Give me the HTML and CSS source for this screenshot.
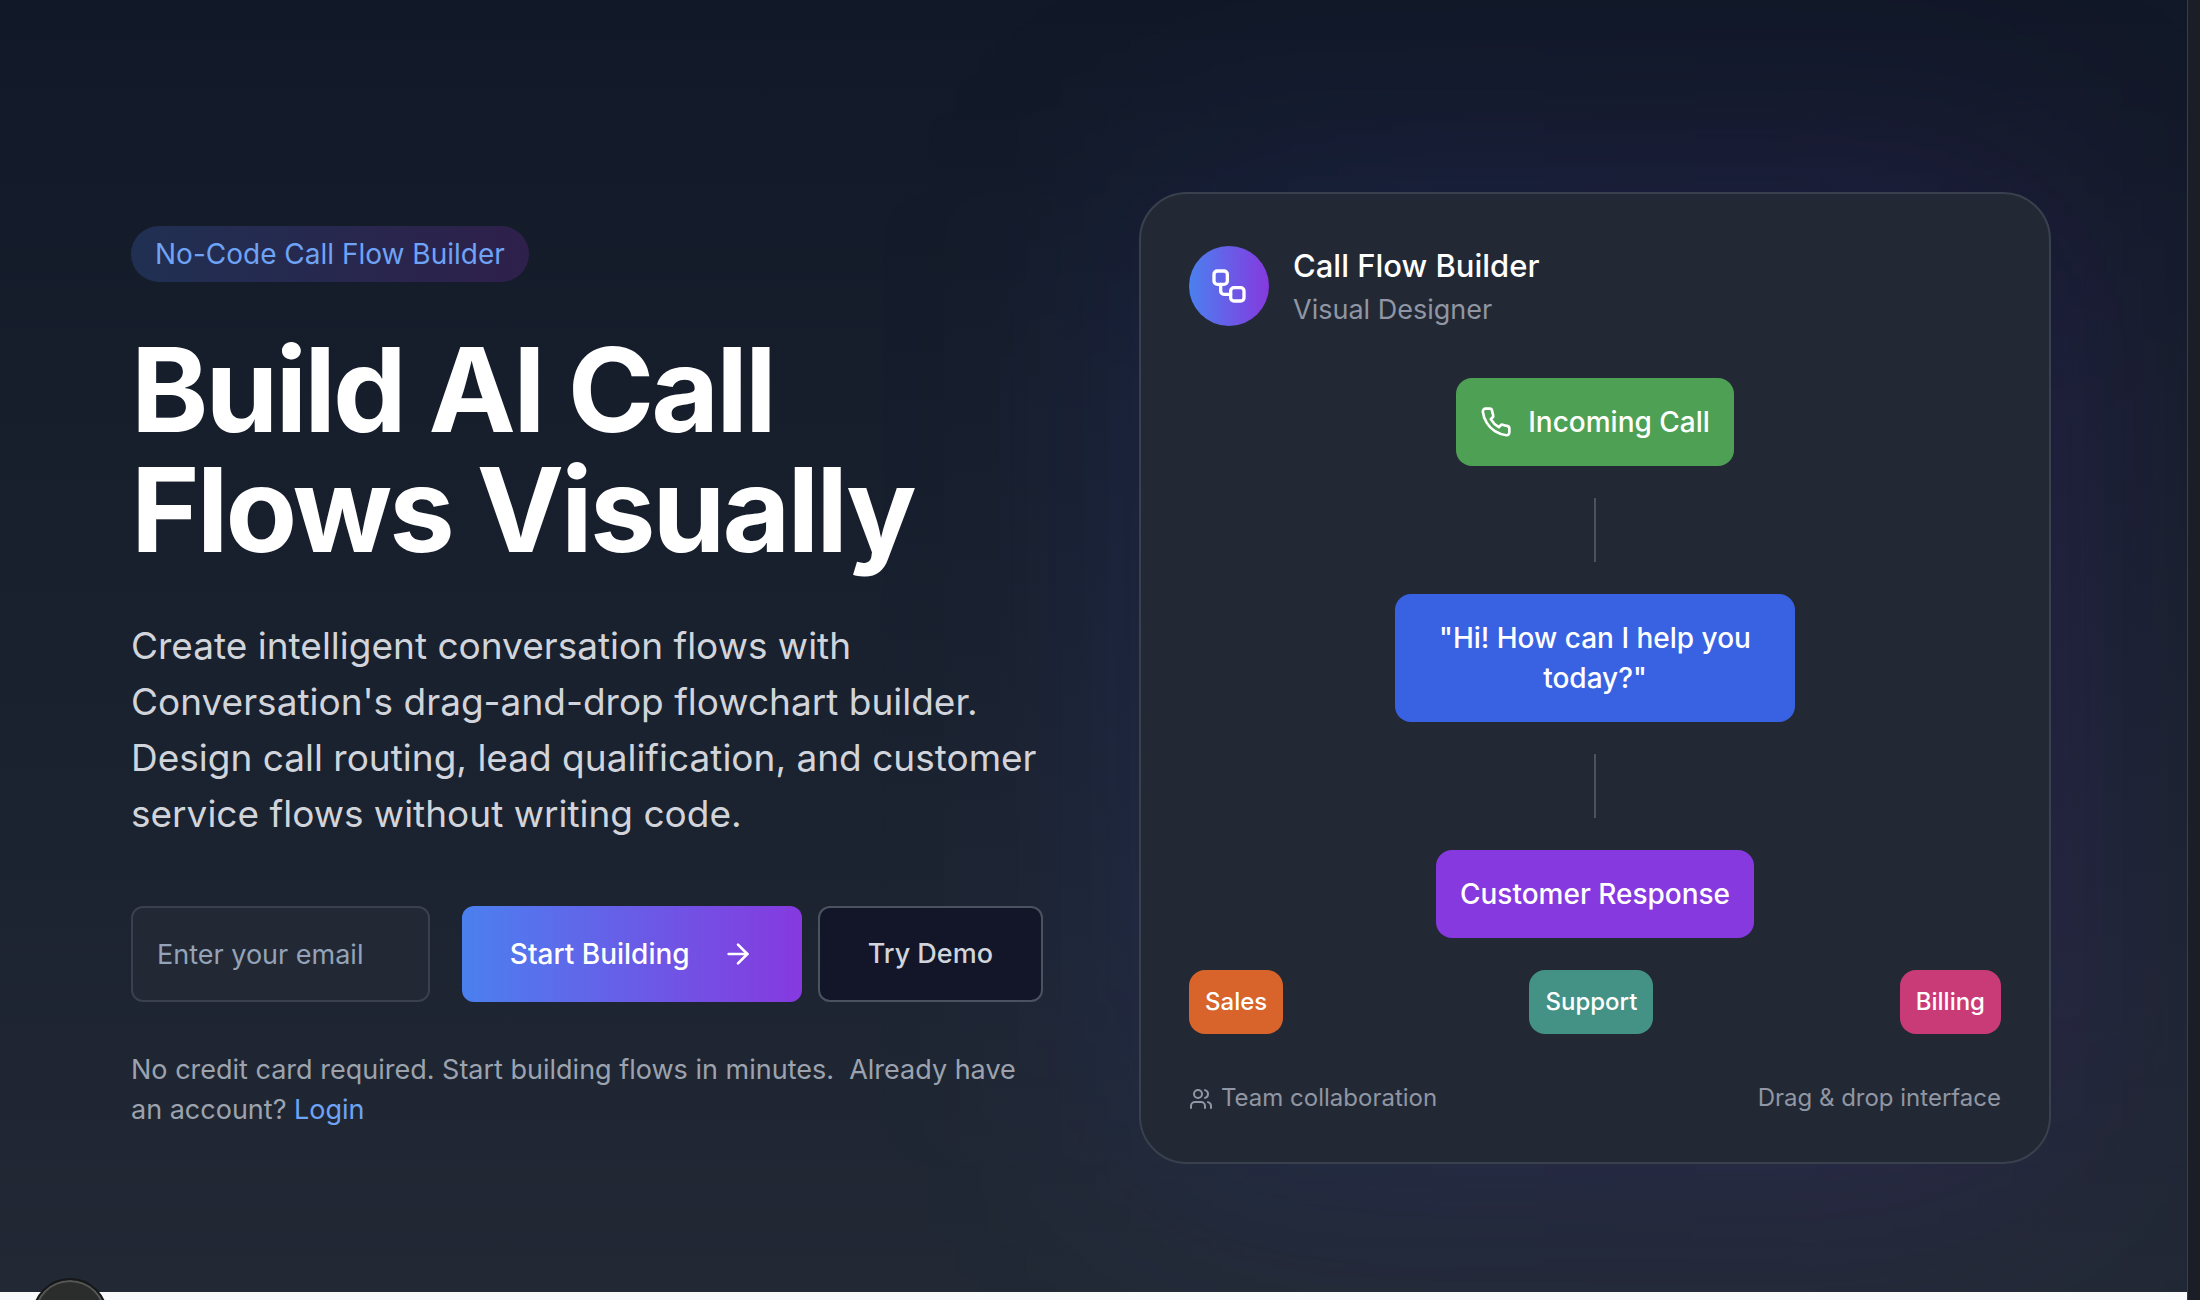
FILE: index.html
```html
<!DOCTYPE html>
<html lang="en">
<head>
  <meta charset="utf-8">
  <meta name="viewport" content="width=device-width, initial-scale=1">
  <title>Call Flow Builder</title>
  <link rel="stylesheet" href="styles.css">
</head>
<body>
  <div class="page">
    <main class="content">
      <section class="hero">
        <div class="hero-grid">
          <div class="intro">
            <span class="badge">No-Code Call Flow Builder</span>
            <h1 class="headline">Build AI Call<br>Flows Visually</h1>
            <p class="lead">Create intelligent conversation flows with Conversation's drag-and-drop flowchart builder. Design call routing, lead qualification, and customer service flows without writing code.</p>
            <form class="signup">
              <input class="email" type="email" placeholder="Enter your email" aria-label="Email address">
              <div class="actions">
                <button class="btn btn-primary" type="submit">
                  Start Building
                  <svg class="icon-md" viewBox="0 0 24 24" aria-hidden="true"><path d="M5 12h14"/><path d="m12 5 7 7-7 7"/></svg>
                </button>
                <button class="btn btn-outline" type="button">Try Demo</button>
              </div>
            </form>
            <p class="note">No credit card required. Start building flows in minutes. &nbsp;Already have an account? <a class="login" href="#login">Login</a></p>
          </div>

          <div class="preview">
            <div class="card">
              <header class="card-head">
                <span class="avatar">
                  <svg class="icon-lg" viewBox="0 0 24 24" aria-hidden="true"><rect width="8" height="8" x="3" y="3" rx="2"/><path d="M7 11v4a2 2 0 0 0 2 2h4"/><rect width="8" height="8" x="13" y="13" rx="2"/></svg>
                </span>
                <div>
                  <h2 class="card-title">Call Flow Builder</h2>
                  <p class="card-subtitle">Visual Designer</p>
                </div>
              </header>
              <div class="flow">
                <div class="node node-green">
                  <svg class="icon-md" viewBox="0 0 24 24" aria-hidden="true"><path d="M22 16.92v3a2 2 0 0 1-2.18 2 19.79 19.79 0 0 1-8.63-3.07 19.5 19.5 0 0 1-6-6 19.79 19.79 0 0 1-3.07-8.67A2 2 0 0 1 4.11 2h3a2 2 0 0 1 2 1.72 12.84 12.84 0 0 0 .7 2.81 2 2 0 0 1-.45 2.11L8.09 9.91a16 16 0 0 0 6 6l1.27-1.27a2 2 0 0 1 2.11-.45 12.84 12.84 0 0 0 2.81.7A2 2 0 0 1 22 16.92z"/></svg>
                  Incoming Call
                </div>
                <div class="connector"></div>
                <div class="node node-blue">"Hi! How can I help you today?"</div>
                <div class="connector"></div>
                <div class="node node-purple">Customer Response</div>
                <div class="branches">
                  <span class="branch branch-orange">Sales</span>
                  <span class="branch branch-teal">Support</span>
                  <span class="branch branch-pink">Billing</span>
                </div>
              </div>
              <footer class="card-foot">
                <span><svg class="icon-sm" viewBox="0 0 24 24" aria-hidden="true"><path d="M16 21v-2a4 4 0 0 0-4-4H6a4 4 0 0 0-4 4v2"/><circle cx="9" cy="7" r="4"/><path d="M22 21v-2a4 4 0 0 0-3-3.87"/><path d="M16 3.13a4 4 0 0 1 0 7.75"/></svg>Team collaboration</span>
                <span>Drag &amp; drop interface</span>
              </footer>
            </div>
          </div>
        </div>
      </section>
      <section class="next"></section>
    </main>
    <aside class="rail"></aside>
  </div>
  <button class="floating" type="button" aria-label="Open menu"></button>
</body>
</html>
```
FILE: styles.css
```css
*,
*::before,
*::after {
  box-sizing: border-box;
}

body {
  margin: 0;
  overflow-x: hidden;
  background: #f9fafb;
  color: #ffffff;
  font-family: Inter, "Liberation Sans", sans-serif;
  font-size: 27px;
  line-height: 40px;
}

h1,
h2,
p {
  margin: 0;
}

svg {
  flex: none;
  fill: none;
  stroke: currentColor;
  stroke-width: 2;
  stroke-linecap: round;
  stroke-linejoin: round;
}

.icon-sm {
  width: 24px;
  height: 24px;
  margin-right: 8px;
  vertical-align: middle;
}

.icon-md {
  width: 32px;
  height: 32px;
}

.icon-lg {
  width: 40px;
  height: 40px;
}

.page {
  display: grid;
  grid-template-columns: minmax(0, 1fr) 13px;
  min-height: 100vh;
}

.content {
  display: flex;
  flex-direction: column;
}

.rail {
  background: #1b1e26;
  border-left: 1px solid #3a3e48;
}

.hero {
  overflow: hidden;
  padding: 192px 53px 128px 48px;
  background: linear-gradient(to bottom, #111827, #222935);
}

.hero-grid {
  display: grid;
  grid-template-columns: repeat(2, minmax(0, 1fr));
  gap: 96px;
  align-items: center;
  max-width: 1920px;
  margin: 0 auto;
}

.intro {
  position: relative;
  z-index: 1;
}

.badge {
  display: table;
  padding: 8px 24px;
  border-radius: 28px;
  background: linear-gradient(to right, #203052, #2e204b);
  color: #6ea3f6;
  font-size: 28px;
}

.headline {
  margin-top: 48px;
  font-size: 117px;
  font-weight: 700;
  line-height: 120px;
  letter-spacing: -0.025em;
}

.lead {
  margin-top: 48px;
  color: #d1d5db;
  font-size: 37px;
  line-height: 56px;
}

.signup {
  display: flex;
  gap: 32px;
  margin-top: 64px;
}

.email {
  flex: 1;
  min-width: 0;
  height: 96px;
  padding: 0 24px;
  border: 2px solid #3a404d;
  border-radius: 12px;
  background: #222935;
  color: #ffffff;
  font: inherit;
}

.email::placeholder {
  color: #94a3b8;
}

.actions {
  display: flex;
  gap: 16px;
}

.btn {
  display: flex;
  align-items: center;
  gap: 32px;
  height: 96px;
  padding: 0 48px;
  border: 0;
  border-radius: 12px;
  color: #ffffff;
  font: inherit;
  font-weight: 500;
  white-space: nowrap;
}

.btn-primary {
  background: linear-gradient(to right, #4b80ef, #8639df);
  font-size: 28px;
}

.btn-outline {
  border: 2px solid #4b5361;
  background: #131529;
  color: #d1d5db;
}

.note {
  margin-top: 48px;
  color: #9ca3af;
}

.login {
  color: #6ea3f6;
  text-decoration: none;
}

.preview {
  position: relative;
}

/* Soft glow behind the card */
.preview::before {
  content: "";
  position: absolute;
  inset: 0;
  border-radius: 48px;
  background: linear-gradient(to right, rgba(59, 100, 246, 0.14), rgba(125, 51, 234, 0.16));
  filter: blur(128px);
}

.card {
  position: relative;
  padding: 48px;
  border: 2px solid #3a414e;
  border-radius: 48px;
  background: #222935;
}

.card-head {
  display: flex;
  align-items: center;
  gap: 24px;
}

.avatar {
  display: grid;
  place-items: center;
  width: 80px;
  height: 80px;
  border-radius: 50%;
  background: linear-gradient(to right, #4b80ef, #8639df);
}

.card-title {
  font-size: 31px;
  font-weight: 500;
  line-height: 48px;
}

.card-subtitle {
  color: #9096a3;
}

.flow {
  display: flex;
  flex-direction: column;
  align-items: center;
  gap: 32px;
  margin-top: 48px;
}

.node {
  display: flex;
  align-items: center;
  gap: 16px;
  padding: 24px;
  border-radius: 16px;
  font-size: 28px;
  font-weight: 500;
}

.node-green {
  background: #4ea154;
}

.node-blue {
  display: block;
  max-width: 400px;
  text-align: center;
  background: #3962e3;
}

.node-purple {
  background: #8639df;
}

.connector {
  width: 2px;
  height: 64px;
  background: #4b5361;
}

.branches {
  display: flex;
  justify-content: space-between;
  align-self: stretch;
  font-size: 24px;
  font-weight: 500;
  line-height: 32px;
}

.branch {
  padding: 16px;
  border-radius: 16px;
}

.branch-orange {
  background: #d8632b;
}

.branch-teal {
  background: #439285;
}

.branch-pink {
  background: #c93b76;
}

.card-foot {
  display: flex;
  justify-content: space-between;
  margin-top: 48px;
  color: #9096a3;
  font-size: 24px;
  line-height: 32px;
}

.next {
  flex: 1;
  background: #f9fafb;
}

.floating {
  position: fixed;
  bottom: -54px;
  left: 32px;
  width: 76px;
  height: 76px;
  padding: 0;
  border: 2px solid #161718;
  border-radius: 50%;
  background: #2b2d2c;
  box-shadow: inset 0 0 0 2px #555655;
}
```
